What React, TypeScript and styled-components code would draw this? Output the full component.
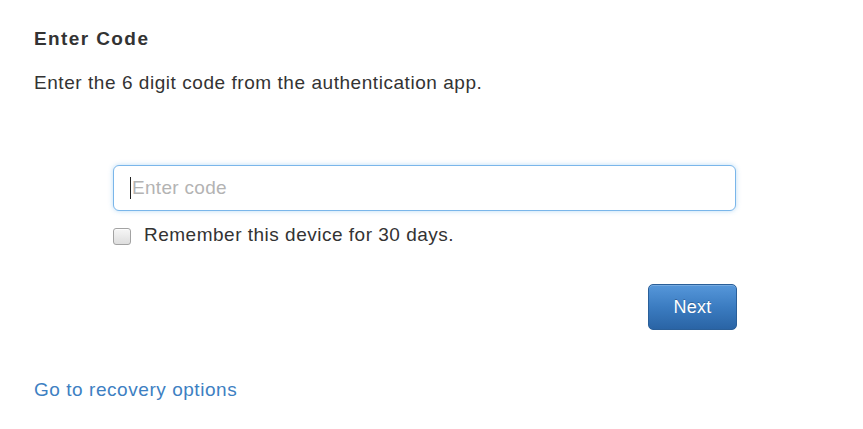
import React from 'react';
import styled, { createGlobalStyle } from 'styled-components';

const GlobalStyle = createGlobalStyle`
  html, body {
    margin: 0;
    padding: 0;
    background: #fff;
  }

  body {
    font-family: "Liberation Sans", Arial, Helvetica, sans-serif;
    color: #333;
  }
`;

const Page = styled.div`
  padding: 29px 34px 0;
`;

const Title = styled.h4`
  margin: 0;
  font-size: 19px;
  line-height: 20px;
  font-weight: 700;
  letter-spacing: 1.4px;
  color: #333;
`;

const Text = styled.p`
  margin: 24px 0 0;
  font-size: 19px;
  line-height: 20px;
  letter-spacing: 0.55px;
`;

const Form = styled.form`
  margin: 72px 0 0 79px;
  width: 623px;
  display: flex;
  flex-direction: column;
`;

const InputWrap = styled.div`
  position: relative;
`;

const CodeInput = styled.input`
  display: block;
  box-sizing: border-box;
  width: 100%;
  height: 46px;
  padding: 0 18px;
  border: 1px solid #7ab6ea;
  border-radius: 6px;
  box-shadow: 0 0 5px rgba(102, 175, 233, 0.45);
  font-family: inherit;
  font-size: 19px;
  letter-spacing: 0.3px;
  color: #333;
  outline: none;

  &::placeholder {
    color: #b3b3b3;
  }
`;

const Caret = styled.span`
  position: absolute;
  left: 17px;
  top: 12px;
  width: 1px;
  height: 22px;
  background: #222;
`;

const CheckRow = styled.label`
  display: flex;
  align-items: flex-start;
  gap: 13px;
  margin-top: 17px;
`;

const Box = styled.input`
  appearance: none;
  margin: 0;
  box-sizing: border-box;
  width: 18px;
  height: 17px;
  border: 1px solid #a3a3a3;
  border-radius: 3px;
  background: linear-gradient(to bottom, #f6f6f6 0%, #dedede 100%);
  box-shadow: inset 0 1px 0 rgba(255, 255, 255, 0.8);
`;

const CheckLabel = styled.span`
  margin-top: -3px;
  font-size: 19px;
  line-height: 20px;
  letter-spacing: 0.5px;
`;

const Actions = styled.div`
  display: flex;
  justify-content: flex-end;
  margin-top: 39px;
  margin-right: -1px;
`;

const NextButton = styled.button`
  box-sizing: border-box;
  width: 89px;
  height: 46px;
  border: 1px solid #2a5f99;
  border-radius: 5px;
  background: linear-gradient(to bottom, #5697da 0%, #3b7cc1 50%, #2a64a5 100%);
  box-shadow: inset 0 1px 0 rgba(255, 255, 255, 0.2);
  color: #fff;
  font-family: inherit;
  font-size: 18px;
  letter-spacing: 0.3px;
  text-shadow: 0 -1px 0 rgba(0, 0, 0, 0.25);
  cursor: pointer;
`;

const RecoveryLink = styled.a`
  display: block;
  margin-top: 50px;
  font-size: 19px;
  line-height: 20px;
  letter-spacing: 0.55px;
  color: #3d80c2;
  text-decoration: none;
`;

const App: React.FC = () => {
  return (
    <>
      <GlobalStyle />
      <Page>
        <Title>Enter Code</Title>
        <Text>Enter the 6 digit code from the authentication app.</Text>
        <Form onSubmit={(e) => e.preventDefault()}>
          <InputWrap>
            <CodeInput type="text" placeholder="Enter code" />
            <Caret />
          </InputWrap>
          <CheckRow>
            <Box type="checkbox" />
            <CheckLabel>Remember this device for 30 days.</CheckLabel>
          </CheckRow>
          <Actions>
            <NextButton type="submit">Next</NextButton>
          </Actions>
        </Form>
        <RecoveryLink href="#">Go to recovery options</RecoveryLink>
      </Page>
    </>
  );
};

export default App;
